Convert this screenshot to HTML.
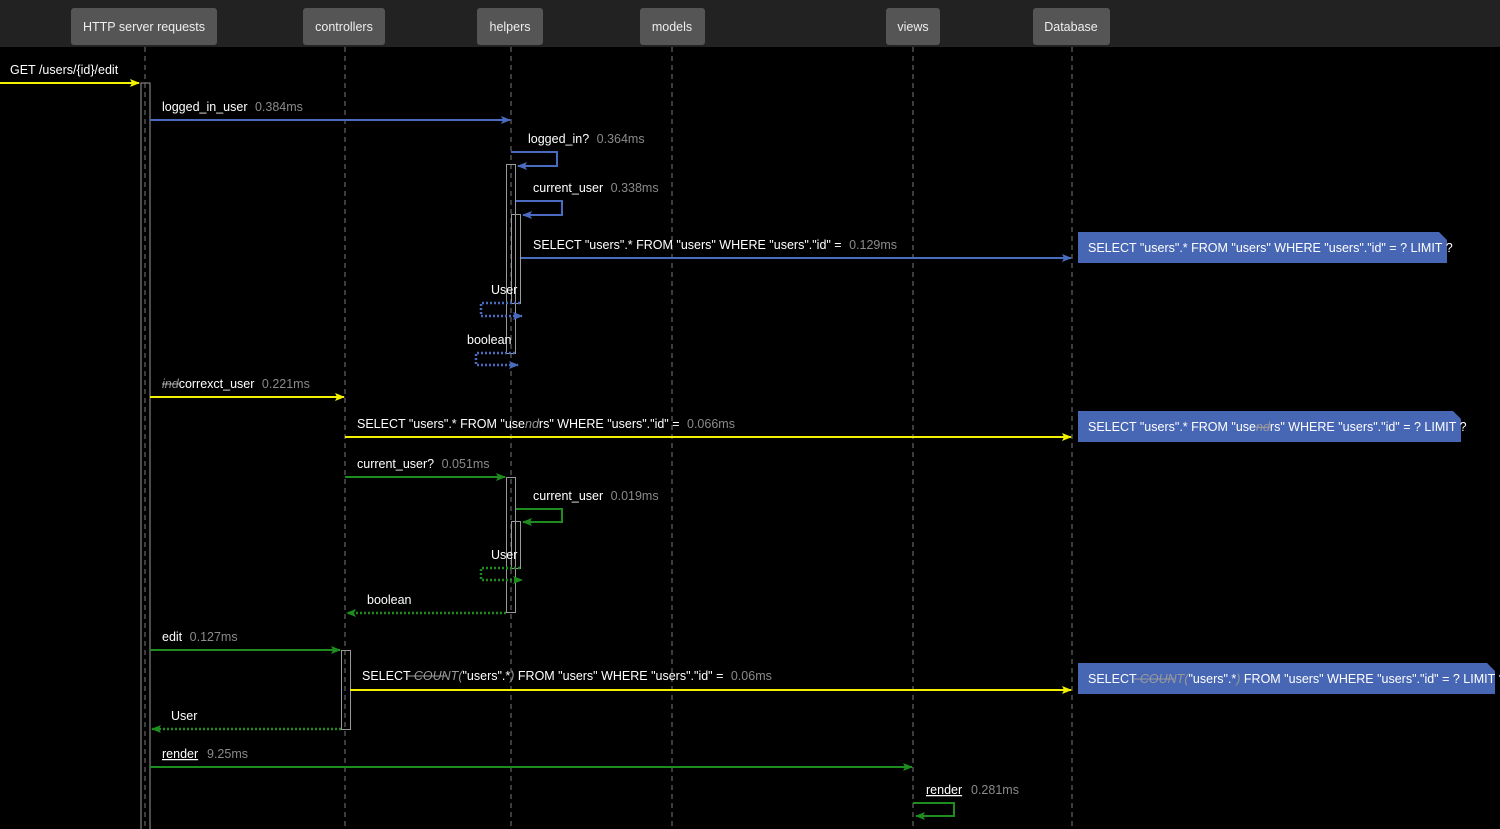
<!DOCTYPE html>
<html><head><meta charset="utf-8"><style>
html,body{margin:0;padding:0;background:#000;}
svg{display:block;}
text{font-family:"Liberation Sans","DejaVu Sans",sans-serif;font-size:12.5px;fill:#fff;}
.t{fill:#8a8a8a;}
.h{font-size:12.5px;fill:#eee;}
</style></head><body>
<svg width="1500" height="829" viewBox="0 0 1500 829" xmlns="http://www.w3.org/2000/svg">
<defs>
<marker id="ay" markerWidth="10" markerHeight="8" refX="9" refY="4" orient="auto" markerUnits="userSpaceOnUse"><path d="M0,0 L10,4 L0,8 L2,4z" fill="#f2f200"/></marker>
<marker id="ab" markerWidth="10" markerHeight="8" refX="9" refY="4" orient="auto" markerUnits="userSpaceOnUse"><path d="M0,0 L10,4 L0,8 L2,4z" fill="#4a6cc0"/></marker>
<marker id="ag" markerWidth="10" markerHeight="8" refX="9" refY="4" orient="auto" markerUnits="userSpaceOnUse"><path d="M0,0 L10,4 L0,8 L2,4z" fill="#1e8c1e"/></marker>
</defs>
<rect width="1500" height="829" fill="#000"/>
<rect width="1500" height="47" fill="#222"/>
<!-- lifelines -->
<g stroke="#777" stroke-width="1" stroke-dasharray="5,4">
<line x1="145" y1="47" x2="145" y2="829"/>
<line x1="345" y1="47" x2="345" y2="829"/>
<line x1="511" y1="47" x2="511" y2="829"/>
<line x1="672" y1="47" x2="672" y2="829"/>
<line x1="913" y1="47" x2="913" y2="829"/>
<line x1="1072" y1="47" x2="1072" y2="829"/>
</g>
<!-- headers -->
<g fill="#555">
<rect x="71" y="8" width="146" height="37" rx="3"/>
<rect x="303" y="8" width="82" height="37" rx="3"/>
<rect x="477" y="8" width="66" height="37" rx="3"/>
<rect x="640" y="8" width="65" height="37" rx="3"/>
<rect x="886" y="8" width="54" height="37" rx="3"/>
<rect x="1033" y="8" width="77" height="37" rx="3"/>
</g>
<g class="h" text-anchor="middle">
<text x="144" y="31" class="h">HTTP server requests</text>
<text x="344" y="31" class="h">controllers</text>
<text x="510" y="31" class="h">helpers</text>
<text x="672" y="31" class="h">models</text>
<text x="913" y="31" class="h">views</text>
<text x="1071" y="31" class="h">Database</text>
</g>
<!-- activations -->
<g fill="none" stroke="#999" stroke-width="1">
<rect x="141" y="83" width="9" height="750"/>
<rect x="506.5" y="164.5" width="9" height="189"/>
<rect x="511.5" y="214.5" width="9" height="89"/>
<rect x="506.5" y="477.5" width="9" height="135"/>
<rect x="511.5" y="521.5" width="9" height="47"/>
<rect x="341.5" y="650.5" width="9" height="79"/>
</g>
<!-- GET -->
<text x="10" y="74">GET /users/{id}/edit</text>
<line x1="0" y1="83" x2="139" y2="83" stroke="#f2f200" stroke-width="2" marker-end="url(#ay)"/>
<!-- logged_in_user -->
<text x="162" y="111">logged_in_user <tspan class="t" dx="4">0.384ms</tspan></text>
<line x1="150" y1="120" x2="510" y2="120" stroke="#4a6cc0" stroke-width="2" marker-end="url(#ab)"/>
<text x="528" y="143">logged_in? <tspan class="t" dx="4">0.364ms</tspan></text>
<path d="M511,152 H557 V166 H518" fill="none" stroke="#4a6cc0" stroke-width="2" marker-end="url(#ab)"/>
<text x="533" y="192">current_user <tspan class="t" dx="4">0.338ms</tspan></text>
<path d="M516,201 H562 V215 H523" fill="none" stroke="#4a6cc0" stroke-width="2" marker-end="url(#ab)"/>
<text x="533" y="249">SELECT "users".* FROM "users" WHERE "users"."id" = <tspan class="t" dx="4">0.129ms</tspan></text>
<line x1="521" y1="258" x2="1071" y2="258" stroke="#4a6cc0" stroke-width="2" marker-end="url(#ab)"/>
<text x="491" y="294">User</text>
<path d="M520,303 H481 V316 H522" fill="none" stroke="#4a6cc0" stroke-width="2.5" stroke-dasharray="2,2" marker-end="url(#ab)"/>
<text x="467" y="344">boolean</text>
<path d="M515,353 H476 V365 H518" fill="none" stroke="#4a6cc0" stroke-width="2.5" stroke-dasharray="2,2" marker-end="url(#ab)"/>
<!-- notes -->
<path d="M1078,232 H1439 L1447,240 V263 H1078z" fill="#4766b4"/>
<text x="1088" y="252">SELECT "users".* FROM "users" WHERE "users"."id" = ? LIMIT ?</text>
<path d="M1078,411 H1453 L1461,419 V442 H1078z" fill="#4766b4"/>
<text x="1088" y="431">SELECT "users".* FROM "use<tspan font-style="italic" fill="#999" text-decoration="line-through">nd</tspan>rs" WHERE "users"."id" = ? LIMIT ?</text>
<path d="M1078,663 H1487 L1495,671 V694 H1078z" fill="#4766b4"/>
<text x="1088" y="683">SELECT <tspan font-style="italic" fill="#999">COUNT(</tspan>"users".*<tspan font-style="italic" fill="#999">)</tspan> FROM "users" WHERE "users"."id" = ? LIMIT ?</text>
<line x1="1133" y1="679" x2="1174" y2="679" stroke="#999" stroke-width="1"/>
<!-- incorrect_user -->
<text x="162" y="388"><tspan font-style="italic" fill="#999">ind</tspan>correxct_user <tspan class="t" dx="4">0.221ms</tspan></text>
<line x1="162" y1="384" x2="180" y2="384" stroke="#aaa" stroke-width="1"/>
<line x1="150" y1="397" x2="344" y2="397" stroke="#f2f200" stroke-width="2" marker-end="url(#ay)"/>
<text x="357" y="428">SELECT "users".* FROM "use<tspan font-style="italic" fill="#999">nd</tspan>rs" WHERE "users"."id" = <tspan class="t" dx="4">0.066ms</tspan></text>
<line x1="345" y1="437" x2="1071" y2="437" stroke="#f2f200" stroke-width="2" marker-end="url(#ay)"/>
<!-- green -->
<text x="357" y="468">current_user? <tspan class="t" dx="4">0.051ms</tspan></text>
<line x1="345" y1="477" x2="505" y2="477" stroke="#1e8c1e" stroke-width="2" marker-end="url(#ag)"/>
<text x="533" y="500">current_user <tspan class="t" dx="4">0.019ms</tspan></text>
<path d="M516,509 H562 V522 H523" fill="none" stroke="#1e8c1e" stroke-width="2" marker-end="url(#ag)"/>
<text x="491" y="559">User</text>
<path d="M520,568 H481 V580 H522" fill="none" stroke="#1e8c1e" stroke-width="2.5" stroke-dasharray="2,2" marker-end="url(#ag)"/>
<text x="367" y="604">boolean</text>
<line x1="506" y1="613" x2="347" y2="613" stroke="#1e8c1e" stroke-width="2.5" stroke-dasharray="2,2" marker-end="url(#ag)"/>
<text x="162" y="641">edit <tspan class="t" dx="4">0.127ms</tspan></text>
<line x1="150" y1="650" x2="340" y2="650" stroke="#1e8c1e" stroke-width="2" marker-end="url(#ag)"/>
<text x="362" y="680">SELECT <tspan font-style="italic" fill="#999">COUNT(</tspan>"users".*<tspan font-style="italic" fill="#999">)</tspan> FROM "users" WHERE "users"."id" = <tspan class="t" dx="4">0.06ms</tspan></text>
<line x1="406" y1="676" x2="447" y2="676" stroke="#999" stroke-width="1"/>
<line x1="350" y1="690" x2="1071" y2="690" stroke="#f2f200" stroke-width="2" marker-end="url(#ay)"/>
<text x="171" y="720">User</text>
<line x1="341" y1="729" x2="152" y2="729" stroke="#1e8c1e" stroke-width="2.5" stroke-dasharray="2,2" marker-end="url(#ag)"/>
<text x="162" y="758" text-decoration="underline">render</text><text x="207" y="758" class="t">9.25ms</text>
<line x1="150" y1="767" x2="912" y2="767" stroke="#1e8c1e" stroke-width="2" marker-end="url(#ag)"/>
<text x="926" y="794" text-decoration="underline">render</text><text x="971" y="794" class="t">0.281ms</text>
<path d="M913,803 H954 V816 H916" fill="none" stroke="#1e8c1e" stroke-width="2" marker-end="url(#ag)"/>
</svg>
</body></html>
